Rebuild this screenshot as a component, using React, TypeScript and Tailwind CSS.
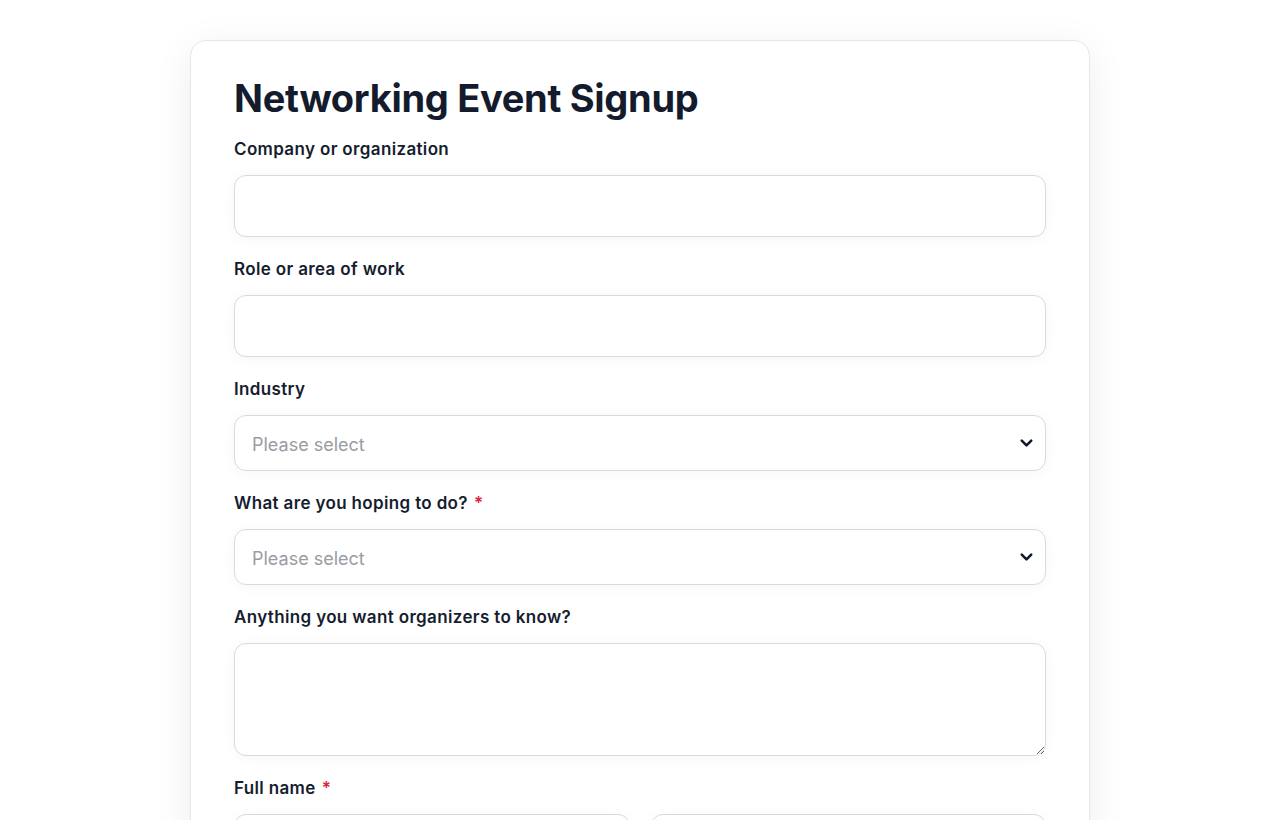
import React from "react";
import { ChevronDown } from "lucide-react";

const font = { fontFamily: "Inter, 'Noto Sans', sans-serif" };

function Label({ children, required }: { children: React.ReactNode; required?: boolean }) {
  return (
    <label className="block text-[17px] leading-[24px] font-semibold tracking-[0.35px] text-[#161d2e] pt-[1px] mb-[14px]">
      {children}
      {required && <span className="text-[#e0243c] ml-[6px]">*</span>}
    </label>
  );
}

const boxCls =
  "block w-full bg-white border border-[#d9dae0] rounded-[12px] shadow-[0_2px_14px_rgba(15,23,42,0.04)] outline-none";

function TextInput() {
  return <input type="text" className={`${boxCls} h-[62px] px-[17px] text-[18px] text-[#161d2e]`} />;
}

function Select() {
  return (
    <div className="relative">
      <select
        defaultValue=""
        className={`${boxCls} h-[56px] pl-[17px] pr-10 pt-[3px] text-[18px] text-[#9a9ba3] appearance-none`}
        style={font}
      >
        <option value="" disabled>
          Please select
        </option>
        <option>Option one</option>
        <option>Option two</option>
      </select>
      <ChevronDown
        className="absolute right-[10px] top-1/2 -translate-y-1/2 pointer-events-none text-[#0f172a]"
        size={19}
        strokeWidth={3.2}
      />
    </div>
  );
}

export default function App() {
  return (
    <div className="min-h-screen bg-white pt-10 pb-10" style={font}>
      <div className="w-[900px] mx-auto bg-white border border-[#e6e7eb] rounded-[16px] shadow-[0_8px_40px_rgba(15,23,42,0.07)] px-[43px] pt-[33px] pb-[44px]">
        <h1 className="text-[38px] leading-[48px] font-bold text-[#141b2d] mb-[14px] tracking-[-0.3px]">
          Networking Event Signup
        </h1>
        <div className="flex flex-col gap-[19px]">
          <div>
            <Label>Company or organization</Label>
            <TextInput />
          </div>
          <div>
            <Label>Role or area of work</Label>
            <TextInput />
          </div>
          <div>
            <Label>Industry</Label>
            <Select />
          </div>
          <div>
            <Label required>What are you hoping to do?</Label>
            <Select />
          </div>
          <div>
            <Label>Anything you want organizers to know?</Label>
            <textarea className={`${boxCls} h-[113px] px-[17px] py-[12px] text-[18px]`} />
          </div>
          <div>
            <Label required>Full name</Label>
            <div className="grid grid-cols-2 gap-[21px]">
              <div>
                <TextInput />
                <div className="text-[14px] text-[#6b7280] mt-2">First name</div>
              </div>
              <div>
                <TextInput />
                <div className="text-[14px] text-[#6b7280] mt-2">Last name</div>
              </div>
            </div>
          </div>
          <div>
            <Label required>Email</Label>
            <TextInput />
          </div>
          <div>
            <button className="h-[52px] px-8 rounded-[12px] bg-[#141b2d] text-white font-semibold text-[16px]">
              Submit
            </button>
          </div>
        </div>
      </div>
    </div>
  );
}
